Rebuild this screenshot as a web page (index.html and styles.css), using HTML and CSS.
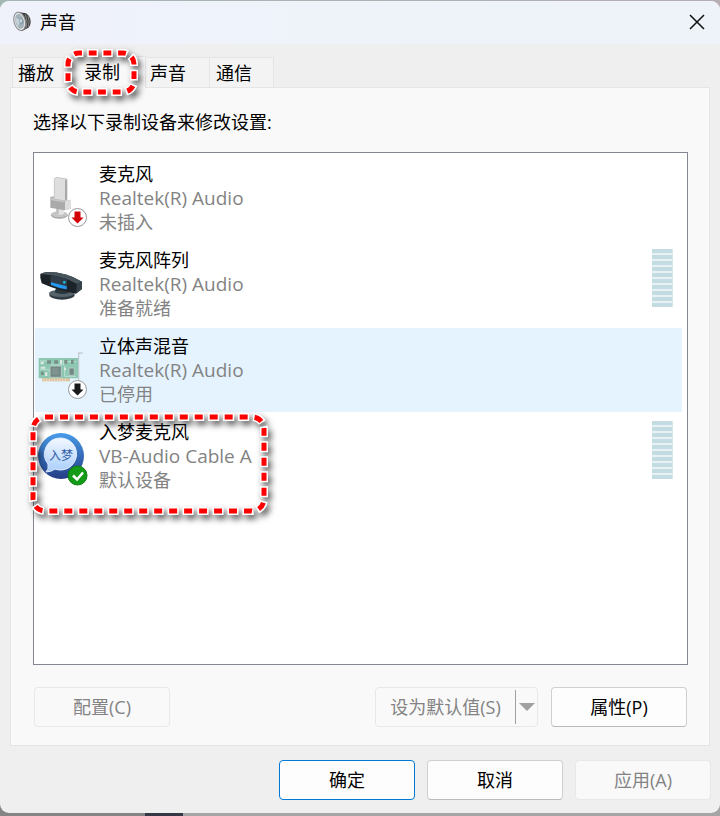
FILE: index.html
```html
<!DOCTYPE html>
<html lang="zh-CN">
  <head>
    <meta charset="UTF-8" />
    <meta name="viewport" content="width=device-width, initial-scale=1.0" />
    <title>声音</title>
    <link rel="stylesheet" href="styles.css" />
  </head>
  <body>
    <main class="dialog">
      <header class="titlebar">
        <svg class="speaker" viewBox="0 0 60 72" aria-hidden="true">
          <path d="M18 6l24 4q14 10 14 25 0 14-10 20l-17 9z" fill="#3d3d3f" />
          <path d="M40 13q9 20 2 43M48 17q6 17 1 34" fill="none" stroke="#8a8a8a" stroke-width="3" />
          <g transform="rotate(-14 23 34)">
            <ellipse cx="23" cy="34" rx="17" ry="28" fill="#e9ebec" stroke="#858585" stroke-width="3" />
            <ellipse cx="23" cy="34" rx="13" ry="23" fill="#a4b2b9" />
            <path d="M13 20l14 12-13 15q-4-13-1-27z" fill="#c5d3d9" />
            <ellipse cx="28" cy="34" rx="6" ry="9" fill="#8396a0" />
            <ellipse cx="27" cy="33" rx="4" ry="6" fill="#c2d5df" />
          </g>
        </svg>
        <h1 class="title">声音</h1>
        <button class="close" type="button" aria-label="关闭">
          <svg viewBox="0 0 16 16"><path d="M1 1l14 14M15 1L1 15" /></svg>
        </button>
      </header>

      <div class="tabs" role="tablist">
        <button class="tab" type="button" role="tab">播放</button>
        <button class="tab active" type="button" role="tab" aria-selected="true">
          录制
          <svg class="mark mark-tab" viewBox="0 0 74 47" aria-hidden="true">
            <rect class="mark-edge" x="4" y="4" width="66" height="39" rx="11" pathLength="195" />
            <rect class="mark-dash" x="4" y="4" width="66" height="39" rx="11" pathLength="195" />
          </svg>
        </button>
        <button class="tab" type="button" role="tab">声音</button>
        <button class="tab" type="button" role="tab">通信</button>
      </div>

      <section class="panel" role="tabpanel">
        <p class="hint" id="hint">选择以下录制设备来修改设置:</p>
        <ul class="devices" role="listbox" aria-labelledby="hint">
          <li class="device" role="option">
            <svg class="icon" viewBox="0 0 54 84" aria-hidden="true">
              <g transform="translate(-1 14) scale(.3333)">
                <ellipse cx="76" cy="136" rx="25" ry="10" fill="#a5a5a5" />
                <ellipse cx="76" cy="133" rx="25" ry="9" fill="#c5c5c5" />
                <path d="M67 112h23v19q-11 6-23 0z" fill="#e4e4e4" />
                <path d="M67 112h7v21l-7-2z" fill="#bbb" />
                <path d="M61 26l6-4 32 5v62l-6 4-32-6z" fill="#dedede" stroke="#b5b5b5" stroke-width="2" />
                <path d="M93 31l6-3v61l-6 3z" fill="#a9a9a9" />
                <path d="M49 81l10-2v8l34 6 18-4v27l-20 5-42-8z" fill="#aaa" />
                <path d="M93 93l18-4v27l-18 5z" fill="#ddd" />
                <path d="M49 81l10 6 34 6-6 4-38-7z" fill="#c6c6c6" />
              </g>
              <circle class="badge" cx="42.5" cy="61.5" r="9" />
              <path d="M39.500 55.500h6v6h3l-6 6-6-6h3z" fill="#d30008" />
            </svg>
            <div class="info">
              <span class="name">麦克风</span>
              <span class="driver">Realtek(R) Audio</span>
              <span>未插入</span>
            </div>
          </li>
          <li class="device" role="option">
            <svg class="icon" viewBox="0 0 54 84" aria-hidden="true">
              <g transform="translate(-5 -92) scale(.3333)">
                <ellipse cx="96" cy="435" rx="38" ry="14" fill="#303b43" />
                <ellipse cx="95" cy="430" rx="38" ry="11" fill="#56636b" />
                <path d="M78 414h34l5 14q-22 9-43-1z" fill="#29343b" />
                <path d="M31 372q8-5 21-6 58 0 104 29v22l-18 14q-56-10-103-31l-4-17z" fill="#1c2328" />
                <path d="M31 372q8-5 21-6 58 0 104 29l-14 7q-49-27-111-30z" fill="#48545c" />
                <path d="M61 377q28 1 51 11l-2 31q-26-4-48-14z" fill="#303d49" />
                <path d="M63 397l47 12v9q-25-4-47-13z" fill="#2398f4" />
                <path d="M140 403l16-8v22l-17 13z" fill="#35424a" />
                <circle cx="103" cy="397" r="4" fill="#14bce6" />
              </g>
            </svg>
            <div class="info">
              <span class="name">麦克风阵列</span>
              <span class="driver">Realtek(R) Audio</span>
              <span>准备就绪</span>
            </div>
            <div class="meter"></div>
          </li>
          <li class="device selected" role="option" aria-selected="true">
            <svg class="icon" viewBox="0 0 54 84" aria-hidden="true">
              <g transform="translate(-1 17) scale(.3333)">
                <path d="M134 37V24h12M134 36v74" fill="none" stroke="#c4cbd0" stroke-width="4" />
                <path d="M24 98h84v11H24z" fill="#dec5a0" />
                <path d="M30 100v9m8-9v9m8-9v9m8-9v9m8-9v9m8-9v9m8-9v9m8-9v9m8-9v9" stroke="#f1e4cf" stroke-width="2" />
                <path d="M14 39h118v61H14z" fill="#8bc7b1" />
                <path d="M18 48h28l9 12h30l9-10h32M18 74h27l8 19M92 62v32h34M88 44v17" fill="none" stroke="#bce1d4" stroke-width="3" />
                <path d="M48 63h34v34H48zM105 69h16v22h-16z" fill="#718985" stroke="#b4cbc4" stroke-width="3" />
                <path d="M54 69h20v20H54z" fill="#81938f" />
                <path d="M39 46h12v10H39zM61 46h11v10H61zM91 45h9v11h-9zM111 44h8v12h-8zM21 80h8v10h-8z" fill="#788f87" />
                <path d="M20 50h9v8h-9zM20 65h14v6H20zM33 82h7v11h-7zM90 68h6v8h-6zM78 45h6v12h-6z" fill="#dce8df" />
              </g>
              <circle class="badge" cx="42.5" cy="61.5" r="9" />
              <path d="M39.500 55.500h6v6h3l-6 6-6-6h3z" fill="#181818" />
            </svg>
            <div class="info">
              <span class="name">立体声混音</span>
              <span class="driver">Realtek(R) Audio</span>
              <span>已停用</span>
            </div>
          </li>
          <li class="device" role="option">
            <svg class="icon" viewBox="0 0 54 84" aria-hidden="true">
              <defs>
                <linearGradient id="ring" x1="0" y1="0" x2="0" y2="1">
                  <stop offset="0" stop-color="#489be9" />
                  <stop offset="1" stop-color="#243d86" />
                </linearGradient>
                <linearGradient id="bubble" x1="0" y1="0" x2="0" y2="1">
                  <stop offset="0" stop-color="#f3f8ff" />
                  <stop offset="1" stop-color="#a8cdfc" />
                </linearGradient>
              </defs>
              <circle cx="26" cy="42" r="23" fill="url(#ring)" />
              <path d="M26 24a16 16 0 1 1-6 31q-4 3-9 3 3-3 2-8A16 16 0 0 1 26 24z" fill="url(#bubble)" stroke="#e4f0ff" />
              <text class="logo-text" x="14" y="46">入梦</text>
              <circle cx="42.5" cy="61.5" r="9.5" fill="#149b17" stroke="#0c7d10" />
              <path d="M38 61.500l4 4 6-7" fill="none" stroke="#fff" stroke-width="2.500" />
            </svg>
            <div class="info">
              <span class="name">入梦麦克风</span>
              <span class="driver">VB-Audio Cable A</span>
              <span>默认设备</span>
            </div>
            <div class="meter"></div>
            <svg class="mark mark-device" viewBox="0 0 239 102" aria-hidden="true">
              <rect class="mark-edge" x="4" y="4" width="231" height="94" rx="12" pathLength="630" />
              <rect class="mark-dash" x="4" y="4" width="231" height="94" rx="12" pathLength="630" />
            </svg>
          </li>
        </ul>
        <div class="actions">
          <button class="btn configure" type="button" disabled>配置(C)</button>
          <div class="split">
            <button class="split-main" type="button" disabled>设为默认值(S)</button>
            <button class="split-arrow" type="button" aria-label="更多默认选项" disabled>
              <svg viewBox="0 0 16 8"><path d="M0 0h16L8 8z" /></svg>
            </button>
          </div>
          <button class="btn" type="button">属性(P)</button>
        </div>
      </section>

      <footer class="footer">
        <button class="btn primary" type="button">确定</button>
        <button class="btn" type="button">取消</button>
        <button class="btn" type="button" disabled>应用(A)</button>
      </footer>
    </main>
  </body>
</html>
```
FILE: styles.css
```css
* {
  box-sizing: border-box;
}
body {
  margin: 0;
  padding: 1px 0 3px;
  background: linear-gradient(to right, #858585 145px, #363945 145px, #363945 183px, #a5a5a5 183px) bottom / 100% 14px no-repeat,
    linear-gradient(to right, #a2b7b2, #b8aeb5);
  font-family: "Open Sans", "Noto Sans CJK SC", sans-serif;
  font-size: 18px;
  line-height: 24px;
  color: #000;
}
button {
  font: inherit;
  color: inherit;
}
.dialog {
  background: #efefef;
  border-radius: 9px;
  overflow: hidden;
}
.titlebar {
  display: flex;
  align-items: center;
  height: 43px;
  padding: 0 15px 2px 12px;
  background: linear-gradient(to right, #eff2fb, #edf3f8);
}
.speaker {
  width: 20px;
  height: 24px;
}
.title {
  flex: 1;
  margin: 0 0 0 8px;
  font-size: 18px;
  font-weight: 400;
}
.close {
  display: flex;
  padding: 0;
  border: 0;
  background: none;
}
.close svg {
  width: 16px;
  height: 16px;
  stroke: #111;
  stroke-width: 1.5;
}

/* tabs */
.tabs {
  display: flex;
  align-items: flex-end;
  padding: 12px 12px 0;
}
.tab {
  width: 66px;
  height: 30px;
  padding: 0 0 0 5px;
  border: 1px solid #e5e5e5;
  border-bottom: 0;
  border-left-width: 0;
  background: #f3f3f3;
  text-align: left;
}
.tab:first-child {
  border-left-width: 1px;
}
.tab:not(:first-child) {
  padding-left: 6px;
}
.tab:last-child {
  width: 64px;
}
.tab.active {
  position: relative;
  z-index: 1;
  width: 70px;
  height: 32px;
  margin: 0 -2px -1px;
  padding: 0 0 2px 8px;
  background: #f9f9f9;
}

/* recording panel */
.panel {
  margin: 0 10px;
  padding: 22px 21px 18px 22px;
  border: 1px solid #e5e5e5;
  background: #f9f9f9;
}
.hint {
  margin: 0 0 18px;
}
.devices {
  display: flex;
  flex-direction: column;
  gap: 2px;
  min-height: 513px;
  margin: 0;
  padding: 3px 5px 3px 1px;
  border: 1px solid #828790;
  background: #fff;
  list-style: none;
}
.device {
  position: relative;
  display: flex;
  height: 84px;
  padding-right: 9px;
}
.selected {
  background: #e5f3ff;
  border-radius: 2px;
}
.icon {
  width: 54px;
  height: 84px;
}
.badge {
  fill: #fff;
  stroke: #999;
}
.logo-text {
  font-size: 12px;
  fill: #315da6;
}
.info {
  display: flex;
  flex: 1;
  flex-direction: column;
  padding: 6px 0 0 10px;
  color: #838383;
}
.name {
  color: #000;
}
.driver {
  font-size: 19px;
}
.meter {
  width: 21px;
  height: 58px;
  margin-top: 7px;
  border-right: 1px solid #d7e8eb;
  background: repeating-linear-gradient(#c2dce2 0 4px, #e8f2f4 4px 6px);
}
.actions {
  display: flex;
  gap: 13px;
  margin-top: 22px;
  padding: 0 1px;
}
.btn {
  width: 136px;
  height: 40px;
  padding: 0;
  border: 1px solid #d0d0d0;
  border-bottom-color: #bbb;
  border-radius: 4px;
  background: #fdfdfd;
}
.btn:disabled {
  border-color: #e8e8e8;
  background: #f9f9f9;
  color: #838383;
}
.btn.primary {
  border-color: #0078d4;
}
.configure {
  margin-right: auto;
}
.split {
  display: flex;
  align-items: center;
  width: 163px;
  height: 40px;
  border: 1px solid #e8e8e8;
  border-radius: 4px;
  color: #838383;
}
.split button {
  padding: 0;
  border: 0;
  background: none;
}
.split .split-main {
  flex: 1;
}
.split .split-arrow {
  width: 22px;
  height: 34px;
  border-left: 1px solid #a0a0a0;
}
.split-arrow svg {
  display: block;
  width: 16px;
  height: 8px;
  margin: 0 auto;
  fill: #a0a0a0;
}
.footer {
  display: flex;
  justify-content: flex-end;
  gap: 12px;
  padding: 14px 9px 13px;
}

/* red dashed callouts */
.mark {
  position: absolute;
  z-index: 2;
  overflow: visible;
  pointer-events: none;
  fill: none;
  filter: drop-shadow(3px 4px 3px rgba(0, 0, 0, 0.65));
}
.mark-tab {
  top: -8px;
  left: -12px;
  width: 74px;
  height: 47px;
}
.mark-device {
  top: -1px;
  left: -6px;
  width: 239px;
  height: 102px;
}
.mark-edge {
  stroke: #fff;
  stroke-width: 8;
  stroke-dasharray: 11 4;
  stroke-dashoffset: 1.5;
}
.mark-dash {
  stroke: #f00;
  stroke-width: 5;
  stroke-dasharray: 8 7;
}
.mark-tab .mark-edge {
  stroke-dashoffset: 6.5;
}
.mark-tab .mark-dash {
  stroke-dashoffset: 5;
}
```
